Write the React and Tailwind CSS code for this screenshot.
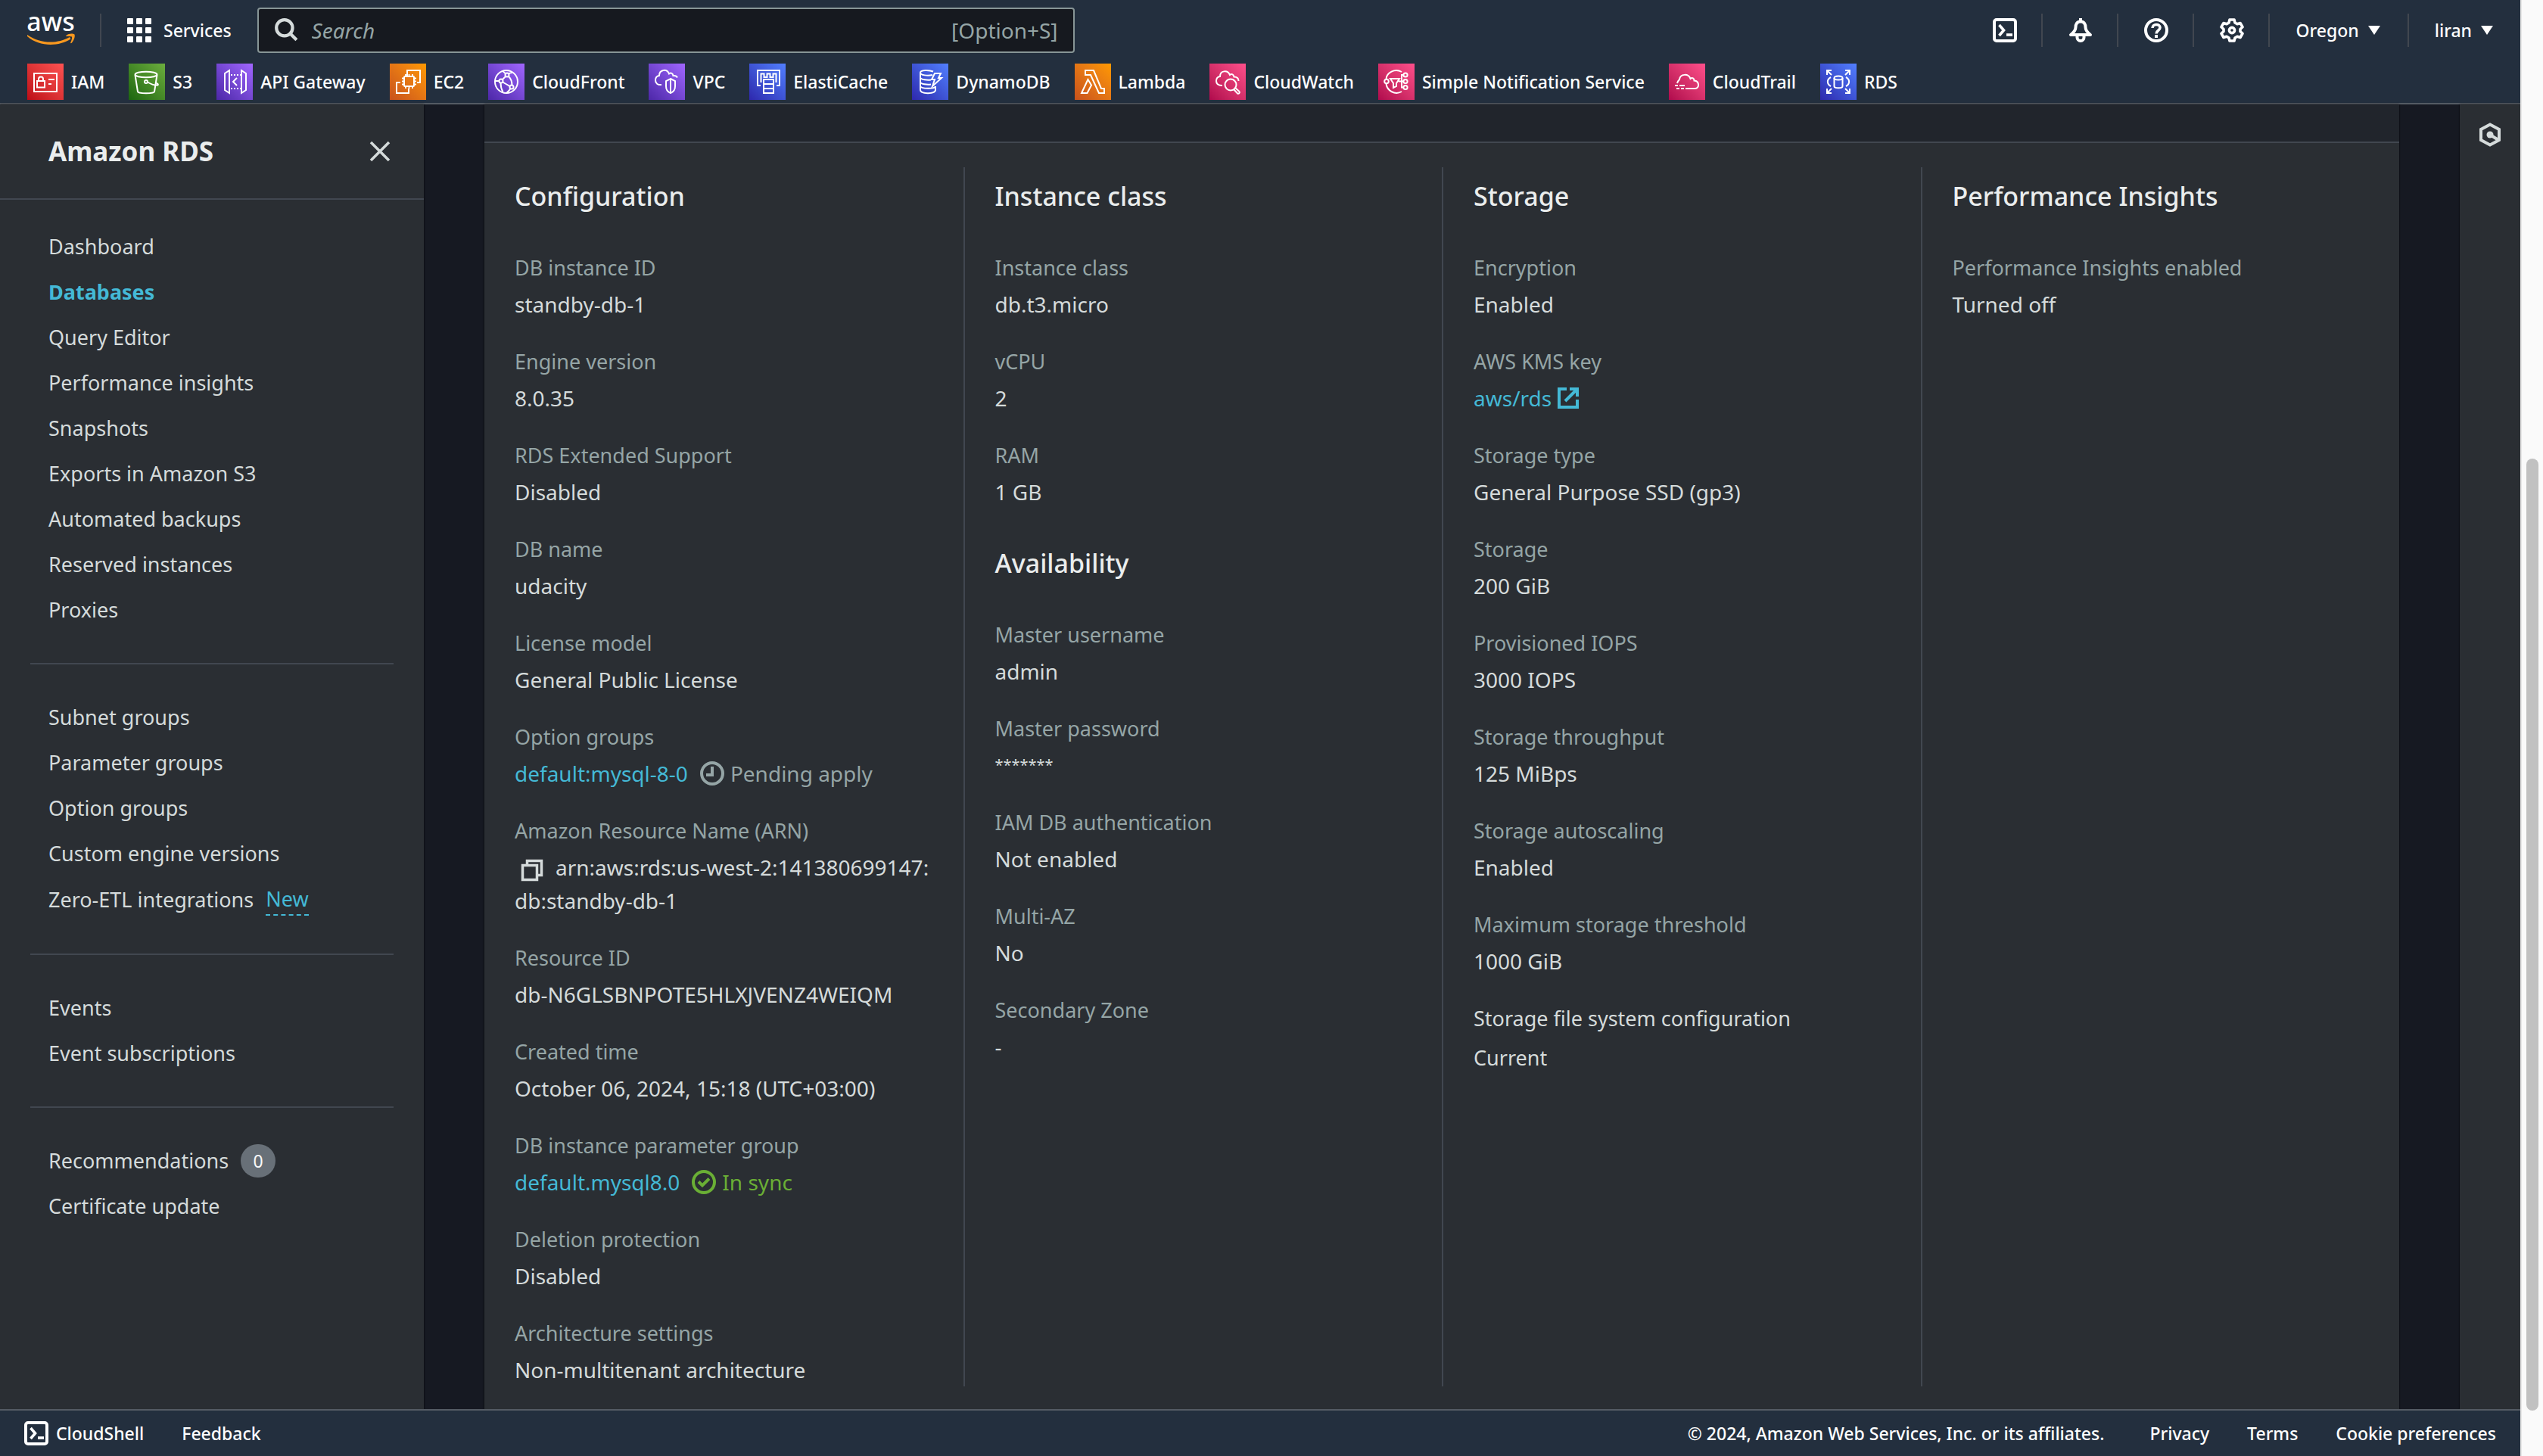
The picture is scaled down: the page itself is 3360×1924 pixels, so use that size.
import React from "react";

const purple = "bg-linear-to-tr from-[#4d27a8] to-[#a166ff]";
const orange = "bg-linear-to-tr from-[#c8511b] to-[#ff9900]";
const blue = "bg-linear-to-tr from-[#2e27ad] to-[#527fff]";
const pink = "bg-linear-to-tr from-[#b0084d] to-[#ff4f8b]";
const red = "bg-linear-to-tr from-[#bd0816] to-[#ff5252]";
const green = "bg-linear-to-tr from-[#1b660f] to-[#6cae3e]";

const favorites = [
  {
    label: "IAM",
    tone: red,
    art: (
      <>
        <path d="M9 13h30v24H9z" />
        <path d="M13 23h10v8.500H13zM15 23v-2.500a3 3 0 0 1 6 0V23M28 21h8M28 27h4" />
      </>
    ),
  },
  {
    label: "S3",
    tone: green,
    art: (
      <>
        <ellipse cx="23" cy="14.500" rx="14.500" ry="3.800" />
        <path d="M8.500 15l3.500 22c0 3 22 3 22 0l3.500-22" />
        <circle cx="23" cy="24" r="2" />
        <path d="M25 24.500c5 3 10 4.500 13.500 4 1-1-.5-2-2-3" />
      </>
    ),
  },
  {
    label: "API Gateway",
    tone: purple,
    art: (
      <>
        <path d="M17 9l-6 4v22l6 4zM33 9l6 4v22l-6 4z" />
        <path d="M19 15h13M19 33h13" strokeDasharray="2 2" />
        <path d="M27 19l-5 5 5 5" />
      </>
    ),
  },
  {
    label: "EC2",
    tone: orange,
    art: (
      <>
        <path d="M23 16V9h17v16h-4M14 25H9v14h16v-6" />
        <rect x="19" y="17" width="13" height="13" rx="1" />
        <path d="M21 17v-3M25.500 17v-3M30 17v-3M21 33v-3M25.500 33v-3M30 33v-3M19 19.500h-3M19 23.500h-3M19 27.500h-3M35 19.500h-3M35 23.500h-3M35 27.500h-3" strokeWidth="1.800" />
      </>
    ),
  },
  {
    label: "CloudFront",
    tone: purple,
    art: (
      <>
        <circle cx="24" cy="24" r="15" />
        <circle cx="25" cy="15" r="2.500" />
        <circle cx="17" cy="23" r="2.500" />
        <circle cx="31" cy="31" r="2.500" />
        <path d="M23 17l-4 4M27 17c3 3 4.500 7 4.500 11.500M19.500 24.500c3 2 6 3.500 9 5.500M14.500 23H9M16.500 25.500c0 5 1 8.500 3 12M29.500 33c-1.500 2.500-3 4-5 5.500M19 10c1.500 1 3 2 4 3.500M27 13.500c1.500-1 3-1.500 5-1.500" />
      </>
    ),
  },
  {
    label: "VPC",
    tone: purple,
    art: (
      <>
        <path d="M17 28c-5 .5-8-2-8-6 0-3 2-5.500 5-6 0-8 10-10 13-2.500 2.500-2 5-.5 5.500 2.500 3.500-.5 4.500.5 5.500 2.500" />
        <path d="M29 20l6 3v7c0 5-2 7.500-6 9-4-1.500-6-4-6-9v-7zM29 20v19" />
      </>
    ),
  },
  {
    label: "ElastiCache",
    tone: blue,
    art: (
      <>
        <path d="M15 29h-4V9h29v20h-4" />
        <path d="M15.500 25V13.500h4V18h4v-4.500h4V18h4v-4.500h4V25" />
        <path d="M19 21h13v18H19zM19 27h13M19 33h13" />
      </>
    ),
  },
  {
    label: "DynamoDB",
    tone: blue,
    art: (
      <>
        <path d="M28 10.500C22 8 11 8.500 11 12c0 3.500 10 4.500 16 3M11 12v23c0 5.500 20 5.500 20 0v-5M11 18.500c1 3 9 3.500 14 3M11 24.500c1 3 9 3.500 14 3M11 30c1 3.500 19 4 20 0" />
        <path d="M30 13h8l-3 6h4L27 30l3-9h-4z" />
      </>
    ),
  },
  {
    label: "Lambda",
    tone: orange,
    art: (
      <>
        <path d="M14 9h11l10 24h4v6h-7L21 15h-7z" />
        <path d="M17.500 21L9 39h7.500L22 28.500z" />
      </>
    ),
  },
  {
    label: "CloudWatch",
    tone: pink,
    art: (
      <>
        <path d="M17 29c-5 0-8-2-8-6 0-3 2-5.500 5-6 0-8 10-9 13-2 2.500-2 5-.5 5.500 2.500 3.500 0 6 2 6 5.500" />
        <circle cx="28" cy="28" r="7.500" />
        <path d="M32 34l5 5.500c2 1 3.500-1 2.500-2.500L34 32" />
      </>
    ),
  },
  {
    label: "Simple Notification Service",
    tone: pink,
    art: (
      <>
        <path d="M31 11C22 6 11 12 10.500 20.500M10.500 27C12 36 22 42 31 37" />
        <circle cx="11" cy="23.500" r="2.800" />
        <path d="M16 20h12l-4 6v4l-4 2v-6zM27 23.500h7M34 15h-3v16.500h3" />
        <circle cx="36" cy="15" r="2.600" />
        <circle cx="36" cy="23.500" r="2.600" />
        <circle cx="36" cy="31.500" r="2.600" />
      </>
    ),
  },
  {
    label: "CloudTrail",
    tone: pink,
    art: (
      <>
        <path d="M11 26c1-3 2-4 3-5 1-8 12-8 14.500-1 2.500-2 5-.5 5 2.500 7 .5 7.500 10.500 1 10.500H22" />
        <path d="M8 29h4M14 29h7M10 33h4M16 33h4" />
      </>
    ),
  },
  {
    label: "RDS",
    tone: blue,
    art: (
      <>
        <path d="M9 15V9h6M9 9l6 6M33 9h6v6M39 9l-6 6M9 33v6h6M9 39l6-6M39 33v6h-6M39 39l-6-6" />
        <ellipse cx="24" cy="19" rx="5.500" ry="2.500" />
        <path d="M18.500 19v11c0 3 11 3 11 0V19M14 18c-5.500 3-5.500 9 0 12M34 18c5.500 3 5.500 9 0 12" />
      </>
    ),
  },
];

const navGroups = [
  [
    "Dashboard",
    "Databases",
    "Query Editor",
    "Performance insights",
    "Snapshots",
    "Exports in Amazon S3",
    "Automated backups",
    "Reserved instances",
    "Proxies",
  ],
  ["Subnet groups", "Parameter groups", "Option groups", "Custom engine versions", "Zero-ETL integrations"],
  ["Events", "Event subscriptions"],
  ["Recommendations", "Certificate update"],
];

function ShellIcon() {
  return (
    <svg viewBox="0 0 32 32" className="size-8" fill="none" stroke="currentColor" strokeWidth="4" aria-hidden="true">
      <rect x="2" y="2" width="28" height="28" rx="3" />
      <path d="M8.500 9l6 7-6 7" strokeWidth="3.600" />
      <path d="M18 22h8" strokeWidth="3.600" />
    </svg>
  );
}

function BellIcon() {
  return (
    <svg viewBox="0 0 32 32" className="size-8" fill="none" stroke="currentColor" strokeWidth="4" strokeLinejoin="round" aria-hidden="true">
      <path d="M16 0v5M16 4.500c-5 0-6.500 4-6.500 7.500 0 4-2 6.500-6.500 10h26c-4.500-3.500-6.500-6-6.500-10 0-3.500-1.500-7.500-6.500-7.500z" />
      <path d="M11.500 23v2.500a4.500 4.500 0 0 0 9 0V23" />
    </svg>
  );
}

function HelpIcon() {
  return (
    <svg viewBox="0 0 32 32" className="size-8" fill="none" stroke="currentColor" strokeWidth="4" aria-hidden="true">
      <circle cx="16" cy="16" r="14" />
      <path d="M11 13c0-6 10-6 10-.5 0 4-5 3.500-5 8" strokeWidth="3.600" />
      <path d="M16 22v4" />
    </svg>
  );
}

function GearIcon() {
  return (
    <svg viewBox="0 0 32 32" className="size-8" fill="none" stroke="currentColor" strokeWidth="3.600" strokeLinejoin="round" aria-hidden="true">
      <path d="M13 2h6l1 4 3 1.800 4-1.300 3 5.200-3 2.800v3l3 2.800-3 5.200-4-1.300-3 1.800-1 4h-6l-1-4-3-1.800-4 1.300-3-5.200 3-2.800v-3l-3-2.800 3-5.200 4 1.300L12 6z" />
      <circle cx="16" cy="16" r="3.600" />
    </svg>
  );
}

function Caret() {
  return (
    <svg viewBox="0 0 16 12" className="h-3 w-4" fill="currentColor" aria-hidden="true">
      <path d="M0 0h16L8 12z" />
    </svg>
  );
}

function ExternalIcon() {
  return (
    <svg viewBox="0 0 28 28" className="size-7" fill="none" stroke="currentColor" strokeWidth="4" aria-hidden="true">
      <path d="M12 2H2v24h24V16M16 2h10v10M26 2L10 18" />
    </svg>
  );
}

function ClockIcon() {
  return (
    <svg viewBox="0 0 32 32" className="size-8" fill="none" stroke="currentColor" strokeWidth="4" aria-hidden="true">
      <circle cx="16" cy="16" r="14" />
      <path d="M16 7v11H8" />
    </svg>
  );
}

function CheckIcon() {
  return (
    <svg viewBox="0 0 32 32" className="size-8" fill="none" stroke="currentColor" strokeWidth="4" aria-hidden="true">
      <circle cx="16" cy="16" r="14" />
      <path d="M9 15.500l5 5 9-9" />
    </svg>
  );
}

function Divider() {
  return <span className="h-11 w-0.5 shrink-0 bg-[#414750]" />;
}

function Header() {
  return (
    <header className="border-b-2 border-[#545b64] bg-[#232f3e] text-[23px] font-medium text-white">
      <div className="flex h-20 items-center px-9">
        <a href="#home" aria-label="AWS home" className="shrink-0">
          <svg viewBox="0 -10 64 60" className="h-[60px] w-16 overflow-visible" aria-hidden="true">
            <text x="31" y="21" textAnchor="middle" fontSize="34" fontWeight="500" fontFamily="Noto Sans, sans-serif" fill="#fff">
              aws
            </text>
            <path d="M0 26c18 12.500 40 12 56 3l1.500 2.500C41 42 16 42 0 28z" fill="#f7981f" />
            <path d="M51.500 27c3.500-3 8.500-3 11-1.500 1 3-1 8.500-4 11.500-1.500.5-1.500-.5-1-1.500 1-2.500 2-5 1.500-7-2-1-4-.5-7-.5-1 0-1.200-.5-.5-1z" fill="#f7981f" />
          </svg>
        </a>
        <span className="mr-[34px] ml-8">
          <span className="block h-11 w-0.5 bg-[#414750]" />
        </span>
        <button type="button" className="flex shrink-0 items-center gap-4">
          <svg viewBox="0 0 32 32" className="size-8" fill="currentColor" aria-hidden="true">
            {[0, 12, 24].map((y) => [0, 12, 24].map((x) => <rect key={`${x}-${y}`} x={x} y={y} width="8" height="8" rx="1" />))}
          </svg>
          Services
        </button>
        <label className="ml-[34px] flex h-[60px] w-[1080px] items-center rounded-sm border-2 border-[#879596] bg-[#16191f] px-5 text-[28px] text-[#95a5a6]">
          <svg viewBox="0 0 30 30" className="mr-[18px] size-8 shrink-0 text-[#d5dbdb]" fill="none" stroke="currentColor" strokeWidth="4" aria-hidden="true">
            <circle cx="13" cy="12" r="10" />
            <path d="M20 19l8 8" />
          </svg>
          <input type="search" aria-label="Search" placeholder="Search" className="min-w-0 flex-1 bg-transparent font-normal italic outline-none placeholder:text-[#95a5a6]" />
          <span className="font-normal">[Option+S]</span>
        </label>
        <div className="ml-auto flex shrink-0 items-center">
          <button type="button" aria-label="CloudShell"><ShellIcon /></button>
          <span className="w-8" /><Divider /><span className="w-[34px]" />
          <button type="button" aria-label="Notifications"><BellIcon /></button>
          <span className="w-8" /><Divider /><span className="w-[34px]" />
          <button type="button" aria-label="Help"><HelpIcon /></button>
          <span className="w-8" /><Divider /><span className="w-[34px]" />
          <button type="button" aria-label="Settings"><GearIcon /></button>
          <span className="w-8" /><Divider /><span className="w-[34px]" />
          <button type="button" className="flex items-center gap-3">Oregon <Caret /></button>
          <span className="w-9" /><Divider /><span className="w-[34px]" />
          <button type="button" className="flex items-center gap-3">liran <Caret /></button>
        </div>
      </div>
      <nav aria-label="Favorites" className="flex gap-8 py-1 pl-9">
        {favorites.map((f) => (
          <a key={f.label} href="#service" className="flex shrink-0 items-center gap-2.5">
            <span className={`size-12 ${f.tone}`}>
              <svg viewBox="0 0 48 48" className="size-12" fill="none" stroke="#fff" strokeWidth="2" aria-hidden="true">
                {f.art}
              </svg>
            </span>
            {f.label}
          </a>
        ))}
      </nav>
    </header>
  );
}

function Sidebar() {
  return (
    <aside className="w-[560px] shrink-0 bg-[#2a2e33] text-[27px] shadow-[0_0_2px_#000]">
      <div className="flex h-[126px] items-center justify-between border-b-2 border-[#414750] pr-11 pl-16">
        <h1 className="text-[35px] font-bold text-[#eaeded]">Amazon RDS</h1>
        <button type="button" aria-label="Close navigation" className="text-[#d5dbdb]">
          <svg viewBox="0 0 28 28" className="size-7" fill="none" stroke="currentColor" strokeWidth="3.500" aria-hidden="true">
            <path d="M2 2l24 24M26 2L2 26" />
          </svg>
        </button>
      </div>
      <nav aria-label="Amazon RDS" className="px-10 pt-8">
        {navGroups.map((group, i) => (
          <ul key={group[0]} className={i === 0 ? "pb-10" : "border-t-2 border-[#414750] py-10"}>
            {group.map((item) => (
              <li key={item} className={item === "Zero-ETL integrations" ? "flex h-[62px] items-center px-6" : "flex h-[60px] items-center px-6"}>
                <a href="#section" className={item === "Databases" ? "font-bold text-[#44b9d6]" : "text-[#d5dbdb]"}>
                  {item}
                </a>
                {item === "Zero-ETL integrations" && (
                  <button type="button" className="ml-4 border-b-2 border-dashed border-[#44b9d6] text-[#44b9d6]">
                    New
                  </button>
                )}
                {item === "Recommendations" && (
                  <span className="ml-4 flex h-11 w-[46px] items-center justify-center rounded-full bg-[#687078] text-[23px] text-[#fafafa]">0</span>
                )}
              </li>
            ))}
          </ul>
        ))}
      </nav>
    </aside>
  );
}

function Column({ children }) {
  return <section className="px-10 pt-4 not-first:border-l-2 not-first:border-[#414750]">{children}</section>;
}

function Group({ title, children }) {
  return (
    <div className="mb-[50px] last:mb-0">
      <h2 className="mb-[51px] text-[34px]/11 font-medium text-[#eaeded]">{title}</h2>
      <dl className="space-y-8">{children}</dl>
    </div>
  );
}

function Item({ label, children }) {
  return (
    <div>
      <dt className="text-[27px]/11 text-[#95a5a6]">{label}</dt>
      <dd className="mt-1 text-[#d5dbdb]">{children}</dd>
    </div>
  );
}

function LinkText({ children }) {
  return (
    <a href="#details" className="text-[#44b9d6]">
      {children}
    </a>
  );
}

function Details() {
  return (
    <div className="grid grid-cols-4 pt-8 pb-[30px] text-[28px]/11">
      <Column>
        <Group title="Configuration">
          <Item label="DB instance ID">standby-db-1</Item>
          <Item label="Engine version">8.0.35</Item>
          <Item label="RDS Extended Support">Disabled</Item>
          <Item label="DB name">udacity</Item>
          <Item label="License model">General Public License</Item>
          <Item label="Option groups">
            <span className="flex items-center">
              <LinkText>default:mysql-8-0</LinkText>
              <span className="ml-4 flex items-center gap-2 text-[#95a5a6]">
                <ClockIcon /> Pending apply
              </span>
            </span>
          </Item>
          <Item label="Amazon Resource Name (ARN)">
            <button type="button" aria-label="Copy ARN" className="mr-4 ml-2 align-middle">
              <svg viewBox="0 0 30 30" className="size-[30px]" fill="none" stroke="currentColor" strokeWidth="3.500" aria-hidden="true">
                <path d="M2.500 8.500h19v19h-19zM8.500 8V2.500h19v19H22" />
              </svg>
            </button>
            arn:aws:rds:us-west-2:141380699147:
            <br />
            db:standby-db-1
          </Item>
          <Item label="Resource ID">db-N6GLSBNPOTE5HLXJVENZ4WEIQM</Item>
          <Item label="Created time">October 06, 2024, 15:18 (UTC+03:00)</Item>
          <Item label="DB instance parameter group">
            <span className="flex items-center">
              <LinkText>default.mysql8.0</LinkText>
              <span className="ml-4 flex items-center gap-2 text-[#6aaf35]">
                <CheckIcon /> In sync
              </span>
            </span>
          </Item>
          <Item label="Deletion protection">Disabled</Item>
          <Item label="Architecture settings">Non-multitenant architecture</Item>
        </Group>
      </Column>
      <Column>
        <Group title="Instance class">
          <Item label="Instance class">db.t3.micro</Item>
          <Item label="vCPU">2</Item>
          <Item label="RAM">1 GB</Item>
        </Group>
        <Group title="Availability">
          <Item label="Master username">admin</Item>
          <Item label="Master password">
            <span className="block text-xl/11">*******</span>
          </Item>
          <Item label="IAM DB authentication">Not enabled</Item>
          <Item label="Multi-AZ">No</Item>
          <Item label="Secondary Zone">-</Item>
        </Group>
      </Column>
      <Column>
        <Group title="Storage">
          <Item label="Encryption">Enabled</Item>
          <Item label="AWS KMS key">
            <a href="#kms" className="flex items-center gap-2 text-[#44b9d6]">
              aws/rds <ExternalIcon />
            </a>
          </Item>
          <Item label="Storage type">General Purpose SSD (gp3)</Item>
          <Item label="Storage">200 GiB</Item>
          <Item label="Provisioned IOPS">3000 IOPS</Item>
          <Item label="Storage throughput">125 MiBps</Item>
          <Item label="Storage autoscaling">Enabled</Item>
          <Item label="Maximum storage threshold">1000 GiB</Item>
          <div className="text-[27px]/11 text-[#d5dbdb]">
            <dt>Storage file system configuration</dt>
            <dd className="mt-2">Current</dd>
          </div>
        </Group>
      </Column>
      <Column>
        <Group title="Performance Insights">
          <Item label="Performance Insights enabled">Turned off</Item>
        </Group>
      </Column>
    </div>
  );
}

function Footer() {
  return (
    <footer className="flex h-[62px] items-center border-t-2 border-[#545b64] bg-[#232f3e] px-8 text-[23px] font-medium text-white">
      <button type="button" className="flex items-center gap-2.5">
        <ShellIcon /> CloudShell
      </button>
      <a href="#feedback" className="ml-[50px]">Feedback</a>
      <span className="ml-auto">© 2024, Amazon Web Services, Inc. or its affiliates.</span>
      <a href="#privacy" className="ml-[60px]">Privacy</a>
      <a href="#terms" className="ml-[50px]">Terms</a>
      <a href="#cookies" className="ml-[50px]">Cookie preferences</a>
    </footer>
  );
}

export default function App() {
  return (
    <div className="flex min-h-screen bg-[#161922] font-['Noto_Sans',sans-serif]">
      <div className="flex min-w-0 flex-1 flex-col">
        <Header />
        <div className="flex flex-1">
          <Sidebar />
          <main className="mx-20 min-w-0 flex-1 bg-[#2a2e33] shadow-[0_0_2px_#000]">
            <div className="h-[51px] border-b-2 border-[#414750] bg-[#21252c]" />
            <Details />
          </main>
          <aside className="flex w-20 shrink-0 justify-center bg-[#2a2e33] pt-6 shadow-[0_0_2px_#000]">
            <button type="button" aria-label="Open panel" className="h-8 text-[#d5dbdb]">
              <svg viewBox="0 0 32 32" className="size-8" fill="none" stroke="currentColor" strokeWidth="4" aria-hidden="true">
                <path d="M16 2.500L28 9v14l-12 6.500L4 23V9z" />
                <circle cx="16" cy="16" r="4.500" fill="currentColor" stroke="none" />
                <path d="M16 16l11 7" />
              </svg>
            </button>
          </aside>
        </div>
        <Footer />
      </div>
      <div className="flex w-[30px] shrink-0 flex-col items-center border-l-2 border-[#e8e8e8] bg-[#fafafa] pt-[606px] pb-[60px]">
        <div className="w-4 flex-1 rounded-full bg-[#c1c1c1]" />
      </div>
    </div>
  );
}
